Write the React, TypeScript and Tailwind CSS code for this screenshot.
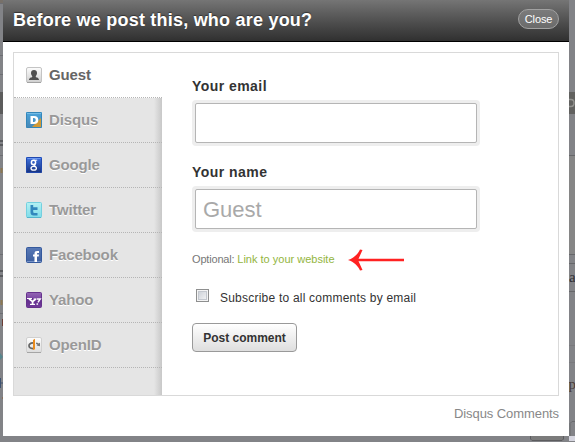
import { useState } from 'react';
import type { ReactNode } from 'react';

const GuestIcon = () => (
  <svg width="16" height="16" viewBox="0 0 16 16">
    <defs>
      <linearGradient id="guest" x1="0" y1="0" x2="0" y2="1">
        <stop offset="0" stopColor="#fdfdfd" />
        <stop offset="1" stopColor="#cfcfcf" />
      </linearGradient>
    </defs>
    <rect x="0.5" y="0.5" width="15" height="15" rx="1.5" fill="url(#guest)" stroke="#c4c4c4" />
    <path d="M1 15.5h14" stroke="#a2a2a2" />
    <path d="M8 3c2 0 3 1.200 3 3 0 1.500-.6 2.300-1.200 3v1c.8.6 3.200.7 3.200 3H3c0-2.300 2.400-2.400 3.200-3V9C5.600 8.300 5 7.500 5 6c0-1.800 1-3 3-3z" fill="#4f4f4f" />
  </svg>
);

const DisqusIcon = () => (
  <svg width="16" height="16" viewBox="0 0 16 16">
    <defs>
      <linearGradient id="disqus" x1="0" y1="0" x2="0" y2="1">
        <stop offset="0" stopColor="#4ba5dc" />
        <stop offset="1" stopColor="#4787b5" />
      </linearGradient>
    </defs>
    <rect width="16" height="16" rx="1" fill="url(#disqus)" />
    <path d="M15 6v9H6z" fill="#d29a35" />
    <path d="M1 1.500h14" stroke="#75bce6" />
    <rect x="0.5" y="0.5" width="15" height="15" rx="1" fill="none" stroke="#3586b8" />
    <path d="M4.500 4H8c2.900 0 4.300 1.500 4.300 4S10.900 12 8 12H4.500z M7 6v4h.9c1.200 0 1.800-.7 1.800-2s-.6-2-1.800-2z" fill="#fff" fillRule="evenodd" />
  </svg>
);

const GoogleIcon = () => (
  <svg width="16" height="16" viewBox="0 0 16 16">
    <defs>
      <linearGradient id="google" x1="0" y1="0" x2="0" y2="1">
        <stop offset="0" stopColor="#3f74e4" />
        <stop offset="1" stopColor="#16317c" />
      </linearGradient>
    </defs>
    <rect width="16" height="16" rx="1" fill="url(#google)" />
    <rect x="0.5" y="0.5" width="15" height="15" rx="1" fill="none" stroke="#2048ae" />
    <path d="M1.500 1.500h13" stroke="#6b97f2" />
    <g fill="none" stroke="#fff">
      <ellipse cx="7.500" cy="5.400" rx="2.100" ry="2.200" strokeWidth="1.500" />
      <path d="M7.500 3.200h3.700" strokeWidth="1" />
      <path d="M9 6.800c-.6 1-1.500 1-.8 1.700l1.600 1.300" strokeWidth="1.400" />
      <ellipse cx="7.700" cy="11.300" rx="2.700" ry="1.900" strokeWidth="1.300" />
    </g>
  </svg>
);

const TwitterIcon = () => (
  <svg width="16" height="16" viewBox="0 0 16 16">
    <defs>
      <linearGradient id="twitter" x1="0" y1="0" x2="0" y2="1">
        <stop offset="0" stopColor="#b4f1f3" />
        <stop offset="1" stopColor="#7fdcea" />
      </linearGradient>
    </defs>
    <rect x="0.5" y="0.5" width="15" height="15" rx="1" fill="url(#twitter)" stroke="#74d0df" />
    <path d="M1 15.500h14" stroke="#55b5cc" />
    <path d="M4.500 3h2.700v2.300h4.300V8H7.200v1.700c0 .8.300 1.200 1.100 1.200h3.200v2.600H7.800c-2.200 0-3.300-1.100-3.300-3.200z" fill="#3288bd" />
  </svg>
);

const FacebookIcon = () => (
  <svg width="16" height="16" viewBox="0 0 16 16">
    <defs>
      <linearGradient id="facebook" x1="0" y1="0" x2="0" y2="1">
        <stop offset="0" stopColor="#5879b6" />
        <stop offset="1" stopColor="#3d5f9f" />
      </linearGradient>
    </defs>
    <rect x="0.5" y="0.5" width="15" height="15" rx="1" fill="url(#facebook)" stroke="#35599c" />
    <path d="M1 14.500h14" stroke="#7693c8" />
    <path d="M8.500 15V9.500H7v-2h1.500V6.700c0-2 .9-2.700 2.600-2.700H13v2h-1c-.8 0-1 .3-1 1v.5h2l-.3 2H11V15z" fill="#fff" />
  </svg>
);

const YahooIcon = () => (
  <svg width="16" height="16" viewBox="0 0 16 16">
    <defs>
      <linearGradient id="yahoo" x1="0" y1="0" x2="0" y2="1">
        <stop offset="0" stopColor="#9365b4" />
        <stop offset="0.350" stopColor="#7f4ca6" />
        <stop offset="0.400" stopColor="#612d8c" />
        <stop offset="1" stopColor="#713a9a" />
      </linearGradient>
    </defs>
    <rect x="0.5" y="0.5" width="15" height="15" rx="1" fill="url(#yahoo)" stroke="#65328c" />
    <g fill="none" stroke="#fff">
      <path d="M1 6.500h5M7.500 7h3" strokeWidth="1.200" />
      <path d="M3 6.700l3.600 2.900M9.700 7L6.600 9.600v2.700" strokeWidth="1.800" />
      <path d="M4 12.400h5" strokeWidth="1.200" />
      <path d="M10.800 7h3.400L12 10.400" strokeWidth="1.500" />
      <path d="M11.300 11.300v1.500" strokeWidth="1.600" />
    </g>
  </svg>
);

const OpenIdIcon = () => (
  <svg width="16" height="16" viewBox="0 0 16 16">
    <defs>
      <linearGradient id="openid" x1="0" y1="0" x2="0" y2="1">
        <stop offset="0" stopColor="#fefefe" />
        <stop offset="1" stopColor="#dcdcdc" />
      </linearGradient>
    </defs>
    <rect x="0.5" y="0.5" width="15" height="15" rx="1.500" fill="url(#openid)" stroke="#d0d0d0" />
    <path d="M1 15.500h14" stroke="#a5a5a5" />
    <path d="M7 5.800C4.300 6 3 7.100 3 8.800s1.500 2.700 4 2.900" fill="none" stroke="#666" strokeWidth="1.700" />
    <path d="M10 5.500c1.300.1 2 .5 2.700 1L14 5.800v3.500l-3.500-.9 1-.7c-.4-.3-.9-.5-1.500-.6z" fill="#777" />
    <path d="M7 3l2-1.200v10.400L7 13z" fill="#ea8b1c" />
  </svg>
);

const providers: { name: string; icon: ReactNode }[] = [
  { name: 'Guest', icon: <GuestIcon /> },
  { name: 'Disqus', icon: <DisqusIcon /> },
  { name: 'Google', icon: <GoogleIcon /> },
  { name: 'Twitter', icon: <TwitterIcon /> },
  { name: 'Facebook', icon: <FacebookIcon /> },
  { name: 'Yahoo', icon: <YahooIcon /> },
  { name: 'OpenID', icon: <OpenIdIcon /> },
];

// Slivers of the dimmed page that show around the dialog
const Backdrop = () => (
  <svg className="absolute inset-0" width="575" height="442" viewBox="0 0 575 442">
    <rect width="575" height="442" fill="#828387" />
    <rect width="3" height="3" fill="#777069" />
    <path d="M0 3.500h3M0 55.500h3M0 74.500h3M0 155.500h3M0 254.500h3M0 313.500h3" stroke="#6d6e73" />
    <rect y="92" width="3" height="22" fill="#5c5c5c" />
    <path d="M0 141h3M0 145h3M0 271h3M0 276h3" stroke="#4c4d52" strokeWidth="1.500" />
    <path d="M1.500 168v5M1.500 300v5" stroke="#8c7852" strokeWidth="2" />
    <path d="M2.500 319v7" stroke="#6b3d34" />
    <path d="M0 353l3 4-3 3" fill="#56858c" />
    <path d="M.5 378v10M0 383h3" stroke="#3f5371" />
    <path d="M2 398h1" stroke="#8b5a2f" />
    <rect x="569" y="155" width="6" height="100" fill="#868686" />
    <rect x="569" y="92" width="6" height="22" fill="#61615f" />
    <path d="M569 99.500h2q3 0 3 3.500t-3 3.500h-2" fill="none" stroke="#92928f" strokeWidth="1.500" />
    <path d="M569 155.500h6M569 254.500h6M569 263.500h6M569 291.500h6" stroke="#66676a" />
    <path d="M569 345.500h6M569 362.500h6" stroke="#79797d" />
    <path d="M575 421.500h-3l-2 2v13l2 2h3" fill="none" stroke="#696a6d" />
    <rect x="569" y="436" width="6" height="5" fill="#d6d6e0" />
    <path d="M530.500 436v3l1.500 1.500h30l1.500-1.500v-3" fill="#7b7b7b" stroke="#5c5c5f" />
    <text x="569" y="282" fontFamily="Liberation Serif, serif" fontSize="15" fill="#303035">a</text>
    <text x="568.500" y="389" fontFamily="Liberation Serif, serif" fontSize="15" fill="#493c39">p</text>
  </svg>
);

const TextField = ({ label, placeholder }: { label: string; placeholder?: string }) => (
  <label className="block">
    <span className="block h-[23px] text-[14px] leading-[18px] font-bold tracking-[0.45px] text-[#333]">{label}</span>
    <span className="block h-[46px] w-[288px] rounded-[4px] bg-[#eee] p-[3px]">
      <input
        type="text"
        placeholder={placeholder}
        className="block h-[40px] w-[282px] rounded-[2px] border border-[#b5b5b5] bg-white px-[7px] pt-[2px] text-[22px] text-[#333] outline-none placeholder:text-[#a9a9a9]"
      />
    </span>
  </label>
);

const App = () => {
  const [active, setActive] = useState('Guest');
  const [subscribe, setSubscribe] = useState(false);

  return (
    <div className="relative h-[442px] w-[575px] overflow-hidden pl-[3px] font-['Liberation_Sans',Arial,sans-serif]">
      <Backdrop />
      <div className="relative h-[436px] w-[566px] bg-white">
        <header className="flex h-[42px] items-start justify-between border-b border-black bg-linear-to-b from-[#757575] to-[#303030] px-[10px]">
          <h1 className="pt-[8px] text-[18px] leading-[24px] font-bold tracking-[0.22px] whitespace-nowrap text-white [text-shadow:0_-1px_1px_#333]">
            Before we post this, who are you?
          </h1>
          <button className="mt-[9px] h-[20px] w-[41px] rounded-full border border-[#a1a1a1] bg-linear-to-b from-[#7b7b7b] to-[#6b6b6b] text-[11px] leading-[18px] tracking-[-0.1px] text-white">
            Close
          </button>
        </header>

        <div className="mx-[10px] mt-[10px] flex h-[344px] border border-[#d9d9d9]">
          <nav className="w-[148px] bg-[#e5e5e5] bg-[linear-gradient(to_left,#c8c8c8,#e5e5e5_8px)]">
            {providers.map(({ name, icon }) => (
              <button
                key={name}
                onClick={() => setActive(name)}
                className={`flex h-[45px] w-full items-center gap-[7px] border-b border-dotted border-[#b5b5b5] pl-[12px] text-left text-[15px] font-bold tracking-[-0.15px] ${
                  active === name ? 'bg-white text-[#666]' : 'text-[#999] [text-shadow:0_1px_0_#fff]'
                }`}
              >
                {icon}
                <span>{name}</span>
              </button>
            ))}
          </nav>

          <main className="flex-1 pt-[24px] pl-[30px]">
            <div className="flex flex-col gap-[17px]">
              <TextField label="Your email" />
              <TextField label="Your name" placeholder="Guest" />
            </div>

            <div className="mt-[17px] flex h-[22px] items-center text-[11px] whitespace-nowrap text-[#777]">
              <span className="w-[143px] pb-[2px]">
                <span className="tracking-[-0.18px]">Optional: </span>
                <a className="text-[#93b540]">Link to your website</a>
              </span>
              <svg className="ml-[13px]" width="56" height="22" viewBox="0 0 56 22">
                <path d="M5 11h51" stroke="#f22" strokeWidth="2.500" />
                <path d="M0 11C6 9 10 5 12 .5L14.500 1 10 11l4.500 10-2.500.5C10 17 6 13 0 11z" fill="#f22" />
              </svg>
            </div>

            <label className="mt-[18px] flex h-[16px] items-center pl-[4px] text-[12px] text-[#333]">
              <input
                type="checkbox"
                checked={subscribe}
                onChange={() => setSubscribe(!subscribe)}
                className="mb-[3px] h-[13px] w-[13px] appearance-none border border-[#8e8f8f] bg-linear-to-br from-[#c6cbd3] to-[#f9f9f9] shadow-[inset_0_0_0_1px_#f4f4f4,inset_0_0_0_2px_#c4c8cf] checked:bg-[#4b6fa5]"
              />
              <span className="ml-[11px] pt-[2px] tracking-[0.22px]">Subscribe to all comments by email</span>
            </label>

            <button className="mt-[18px] block h-[29px] w-[105px] rounded-[4px] border border-[#999] bg-linear-to-b from-white to-[#dedede] text-[12px] font-bold text-[#333]">
              Post comment
            </button>
          </main>
        </div>

        <footer className="pt-[10px] pr-[10px] text-right text-[13px] leading-[16px] tracking-[-0.08px] text-[#888]">Disqus Comments</footer>
      </div>
    </div>
  );
};

export default App;
